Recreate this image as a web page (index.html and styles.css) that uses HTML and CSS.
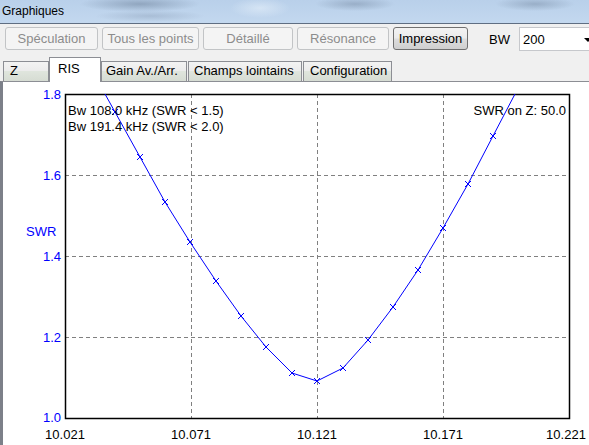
FILE: index.html
```html
<!DOCTYPE html>
<html>
<head>
<meta charset="utf-8">
<link rel="stylesheet" href="styles.css">
</head>
<body>
<div class="window">
  <div class="titlebar">Graphiques</div>
  <div class="toolbar">
    <button class="btn dis w1">Spéculation</button>
    <button class="btn dis w2">Tous les points</button>
    <button class="btn dis w3">Détaillé</button>
    <button class="btn dis w4">Résonance</button>
    <button class="btn act w5">Impression</button>
    <span class="bwlabel">BW</span>
    <div class="select"><span>200</span><span class="arrow"></span></div>
  </div>
  <div class="tabs">
    <div class="tab t1">Z</div>
    <div class="tab sel t2">RIS</div>
    <div class="tab t3">Gain Av./Arr.</div>
    <div class="tab t4">Champs lointains</div>
    <div class="tab t5">Configuration</div>
  </div>
  <div class="panel">
    <svg class="chart" width="586" height="363" viewBox="3 82 586 363">
      <defs>
        <clipPath id="plotclip"><rect x="65" y="94" width="505" height="325"/></clipPath>
      </defs>
      <g class="grid">
        <line x1="65" y1="175.5" x2="569" y2="175.5"/>
        <line x1="65" y1="256.5" x2="569" y2="256.5"/>
        <line x1="65" y1="337.5" x2="569" y2="337.5"/>
        <line x1="191.5" y1="94" x2="191.5" y2="418"/>
        <line x1="317.5" y1="94" x2="317.5" y2="418"/>
        <line x1="443.5" y1="94" x2="443.5" y2="418"/>
      </g>
      <rect class="frame" x="65.5" y="94.5" width="504" height="324"/>
      <g clip-path="url(#plotclip)">
        <polyline class="curve" points="105,94 115,112 140,157 165,202 190,242 216,281 241,316 266,347 292,373 317,381 343,368 368,340 393,307 418,270 443,228 468,184 493,136 515,94"/>
        <path class="marks" d="M112 109L118 115M112 115L118 109M137 154L143 160M137 160L143 154M162 199L168 205M162 205L168 199M187 239L193 245M187 245L193 239M213 278L219 284M213 284L219 278M238 313L244 319M238 319L244 313M263 344L269 350M263 350L269 344M289 370L295 376M289 376L295 370M314 378L320 384M314 384L320 378M340 365L346 371M340 371L346 365M365 337L371 343M365 343L371 337M390 304L396 310M390 310L396 304M415 267L421 273M415 273L421 267M440 225L446 231M440 231L446 225M465 181L471 187M465 187L471 181M490 133L496 139M490 139L496 133"/>
      </g>
      <text class="info" x="68" y="115">Bw 108.0 kHz (SWR &lt; 1.5)</text>
      <text class="info" x="68" y="131">Bw 191.4 kHz (SWR &lt; 2.0)</text>
      <text class="info end" x="566" y="115">SWR on Z: 50.0</text>
      <text class="ylab end" x="61" y="99">1.8</text>
      <text class="ylab end" x="61" y="180">1.6</text>
      <text class="ylab end" x="61" y="261">1.4</text>
      <text class="ylab end" x="61" y="342">1.2</text>
      <text class="ylab end" x="61" y="422">1.0</text>
      <text class="ylab" x="26" y="236">SWR</text>
      <text class="xlab" x="65" y="439">10.021</text>
      <text class="xlab" x="191" y="439">10.071</text>
      <text class="xlab" x="317" y="439">10.121</text>
      <text class="xlab" x="443" y="439">10.171</text>
      <text class="xlab" x="566" y="439">10.221</text>
    </svg>
  </div>
</div>
</body>
</html>
```
FILE: styles.css
```css
* { box-sizing: border-box; }
html, body { margin: 0; padding: 0; }
body {
  width: 589px;
  height: 445px;
  overflow: hidden;
  background: #f0f0f0;
  font-family: "Liberation Sans", Arial, sans-serif;
  font-size: 13px;
  color: #000;
}
.window { width: 589px; height: 445px; display: flex; flex-direction: column; }
.titlebar {
  height: 24px;
  padding-left: 2px;
  line-height: 22px;
  font-size: 12px;
  border-bottom: 1px solid #5f6e82;
  background:
    radial-gradient(ellipse 60px 8px at 140px 4px, rgba(110,130,155,0.55), rgba(110,130,155,0) 100%),
    radial-gradient(ellipse 55px 6px at 150px 16px, rgba(140,160,185,0.45), rgba(140,160,185,0) 100%),
    radial-gradient(ellipse 40px 7px at 355px 4px, rgba(120,140,165,0.5), rgba(120,140,165,0) 100%),
    radial-gradient(ellipse 40px 7px at 535px 4px, rgba(120,140,165,0.5), rgba(120,140,165,0) 100%),
    radial-gradient(ellipse 30px 10px at 260px 8px, rgba(230,240,250,0.6), rgba(230,240,250,0) 100%),
    linear-gradient(#b9d0ea, #c3d8ef);
}
.toolbar {
  height: 27px;
  padding: 3px 0 0 5px;
  display: flex;
  align-items: flex-start;
  overflow: hidden;
}
.btn {
  height: 23px;
  margin: 0 4px 0 0;
  padding: 0;
  font-family: "Liberation Sans", Arial, sans-serif;
  font-size: 13px;
  line-height: 21px;
  border-radius: 3px;
  text-align: center;
  flex: none;
}
.btn.dis {
  color: #8c8c8c;
  border: 1px solid #c2c4c6;
  background: #f4f4f4;
}
.btn.act {
  color: #000;
  border: 1px solid #707070;
  background: linear-gradient(#f3f3f3 0%, #ebebeb 48%, #dddddd 52%, #cfcfcf 100%);
}
.w1 { width: 93px; }
.w2 { width: 97px; }
.w3 { width: 90px; }
.w4 { width: 92px; }
.w5 { width: 75px; }
.bwlabel {
  margin-left: 17px;
  line-height: 26px;
  height: 23px;
  flex: none;
}
.select {
  margin-left: 9px;
  width: 80px;
  flex: none;
  height: 24px;
  background: #fff;
  border: 1px solid #c6c8cc;
  border-right: none;
  display: flex;
  align-items: center;
  padding-left: 3px;
  line-height: 21px;
}
.select .arrow {
  margin-left: 39px;
  width: 0;
  height: 0;
  border-left: 4px solid transparent;
  border-right: 4px solid transparent;
  border-top: 4px solid #000;
  margin-top: 2px;
}
.tabs {
  height: 30px;
  padding-left: 3px;
  display: flex;
  align-items: flex-end;
  position: relative;
  z-index: 2;
}
.tab {
  height: 20px;
  padding: 1px 0 0 6px;
  line-height: 15px;
  border: 1px solid #8c8e94;
  border-bottom: none;
  background: linear-gradient(#f3f3f3 0%, #ececec 45%, #dfe5dd 50%, #d6dcd3 100%);
}
.tab.sel {
  height: 25px;
  margin-bottom: -1px;
  padding: 3px 0 0 8px;
  background: #fff;
}
.t1 { width: 46px; }
.t2 { width: 52px; }
.t3 { width: 86px; padding-left: 4px; }
.t4 { width: 114px; margin-left: 1px; padding-left: 5px; }
.t5 { width: 89px; margin-left: 1px; padding-left: 6px; }
.panel {
  flex: 1;
  background: #fff;
  border-top: 1px solid #8c8e94;
  border-left: 3px solid #7c8089;
  position: relative;
  z-index: 1;
}
.chart { display: block; }
.chart text {
  font-family: "Liberation Sans", Arial, sans-serif;
  font-size: 13px;
}
.chart .end { text-anchor: end; }
.chart .info { fill: #000; }
.chart .ylab { fill: #0000ff; }
.chart .xlab { fill: #000; text-anchor: middle; }
.grid line {
  stroke: #808080;
  stroke-width: 1;
  stroke-dasharray: 4 3;
}
.frame { fill: none; stroke: #000; stroke-width: 1.5; }
.curve { fill: none; stroke: #0000ff; stroke-width: 1; }
.marks { fill: none; stroke: #0000ff; stroke-width: 1; }
```
